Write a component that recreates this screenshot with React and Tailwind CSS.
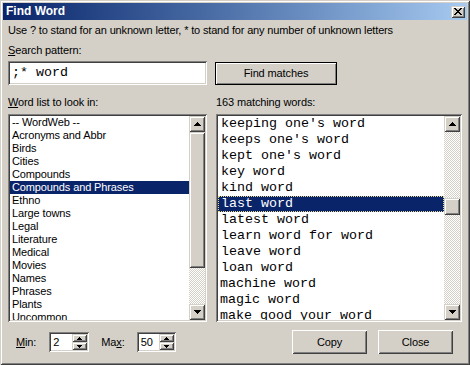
import React from 'react';

const leftItems = [
  '-- WordWeb --',
  'Acronyms and Abbr',
  'Birds',
  'Cities',
  'Compounds',
  'Compounds and Phrases',
  'Ethno',
  'Large towns',
  'Legal',
  'Literature',
  'Medical',
  'Movies',
  'Names',
  'Phrases',
  'Plants',
  'Uncommon',
];

const rightItems = [
  "keeping one's word",
  "keeps one's word",
  "kept one's word",
  'key word',
  'kind word',
  'last word',
  'latest word',
  'learn word for word',
  'leave word',
  'loan word',
  'machine word',
  'magic word',
  'make good your word',
];

// classic 3D edges
const sunken =
  'shadow-[inset_1px_1px_#808080,inset_-1px_-1px_#ffffff,inset_2px_2px_#404040,inset_-2px_-2px_#d4d0c8]';
const scrollRaised =
  'shadow-[inset_1px_1px_#d4d0c8,inset_-1px_-1px_#404040,inset_2px_2px_#ffffff,inset_-2px_-2px_#808080]';
const pushRaised =
  'shadow-[inset_1px_1px_#ffffff,inset_-1px_-1px_#404040,inset_2px_2px_#d4d0c8,inset_-2px_-2px_#808080]';
const dither =
  'bg-[image:repeating-conic-gradient(#ffffff_0_25%,#d4d0c8_0_50%)] bg-size-[2px_2px]';

const Arrow = ({ down = false, small = false }) => {
  const rows = small ? [1, 3, 5] : [1, 3, 5, 7];
  const w = rows[rows.length - 1];
  const order = down ? [...rows].reverse() : rows;
  return (
    <svg width={w} height={rows.length} viewBox={`0 0 ${w} ${rows.length}`} shapeRendering="crispEdges">
      {order.map((rw, i) => (
        <rect key={i} x={(w - rw) / 2} y={i} width={rw} height="1" fill="#000" />
      ))}
    </svg>
  );
};

const ScrollBtn = ({ down }) => (
  <div className={`h-[16px] w-[16px] bg-[#d4d0c8] flex items-center justify-center ${scrollRaised}`}>
    <Arrow down={down} />
  </div>
);

const ScrollBar = ({ spacer, thumb }) => (
  <div className="w-[16px] h-full flex flex-col shrink-0">
    <ScrollBtn />
    <div className={`flex-1 flex flex-col ${dither}`}>
      <div className={spacer} />
      <div className={`${thumb} w-[16px] bg-[#d4d0c8] ${scrollRaised}`} />
    </div>
    <ScrollBtn down />
  </div>
);

const PushButton = ({ children, className = '' }) => (
  <div
    className={`h-[24px] flex items-center justify-center bg-[#d4d0c8] ${pushRaised} ${className}`}
  >
    {children}
  </div>
);

const Spinner = ({ value, className = '' }) => (
  <div className={`h-[20px] bg-white p-[2px] flex ${sunken} ${className}`}>
    <div className="flex-1 pl-[2px] leading-[16px] text-[11px]">{value}</div>
    <div className="w-[15px] flex flex-col">
      <div className={`flex-1 flex items-center justify-center bg-[#d4d0c8] ${scrollRaised}`}>
        <Arrow small />
      </div>
      <div className={`flex-1 flex items-center justify-center bg-[#d4d0c8] ${scrollRaised}`}>
        <Arrow small down />
      </div>
    </div>
  </div>
);

export default function App() {
  return (
    <div
      className="w-[470px] h-[365px] bg-[#d4d0c8] p-[3px] flex flex-col text-[11px] tracking-[-0.12px] text-black font-['Liberation_Sans',Arial,sans-serif] shadow-[inset_1px_1px_#d4d0c8,inset_-1px_-1px_#404040,inset_2px_2px_#ffffff,inset_-2px_-2px_#808080] select-none"
    >
      {/* title bar */}
      <div className="h-[17px] shrink-0 flex items-center justify-between pl-[3px] pr-[2px] bg-linear-to-r from-[#0a246a] to-[#a6caf0]">
        <span className="text-white font-bold text-[12px] leading-[17px] tracking-normal">Find Word</span>
        <div className={`w-[14px] h-[12px] bg-[#d4d0c8] flex items-center justify-center ${scrollRaised}`}>
          <svg width="8" height="7" viewBox="0 0 8 7" shapeRendering="crispEdges">
            <path d="M0 0h2v1h-2zM6 0h2v1h-2zM1 1h2v1h-2zM5 1h2v1h-2zM2 2h4v1h-4zM3 3h2v1h-2zM2 4h4v1h-4zM1 5h2v1h-2zM5 5h2v1h-2zM0 6h2v1h-2zM6 6h2v1h-2z" fill="#000" />
          </svg>
        </div>
      </div>

      <div className="flex-1 flex flex-col px-[5px]">
        <div className="mt-[4px] leading-[13px] tracking-[-0.16px]">
          Use ? to stand for an unknown letter, * to stand for any number of unknown letters
        </div>
        <div className="mt-[7px] leading-[13px]">
          <span className="underline">S</span>earch pattern:
        </div>

        <div className="mt-[4px] flex items-center">
          <div className={`w-[199px] h-[24px] bg-white p-[2px] flex items-center ${sunken}`}>
            <span className="pl-[2px] font-['Liberation_Mono','Courier_New',monospace] text-[13.33px] leading-[16px] tracking-normal">
              ;* word
            </span>
          </div>
          <div className="ml-[8px] w-[122px] h-[23px] flex items-center justify-center bg-[#d4d0c8] shadow-[inset_1px_1px_#000,inset_-1px_-1px_#000,inset_2px_2px_#ffffff,inset_-2px_-2px_#808080]">
            Find matches
          </div>
        </div>

        <div className="mt-[11px] flex leading-[13px]">
          <div className="w-[208px]">
            <span className="underline">W</span>ord list to look in:
          </div>
          <div>163 matching words:</div>
        </div>

        {/* lists */}
        <div className="mt-[5px] flex h-[208px]">
          <div className={`w-[199px] h-full bg-white p-[2px] flex ${sunken}`}>
            <div className="flex-1 overflow-hidden">
              {leftItems.map((it, i) => (
                <div
                  key={it}
                  className={`h-[13px] leading-[13px] pl-[2px] whitespace-nowrap ${
                    i === 5 ? 'bg-[#0a246a] text-white' : ''
                  }`}
                >
                  {it}
                </div>
              ))}
            </div>
            <ScrollBar spacer="h-0" thumb="h-[136px]" />
          </div>

          <div className={`ml-[9px] w-[246px] h-full bg-white p-[2px] flex ${sunken}`}>
            <div className="flex-1 overflow-hidden font-['Liberation_Mono','Courier_New',monospace] text-[13.33px] tracking-normal">
              {rightItems.map((it, i) => (
                <div
                  key={it}
                  className={`h-[16px] leading-[16px] whitespace-nowrap ${i >= 10 ? 'pl-[2px]' : 'pl-[3px]'} ${
                    i === 5
                      ? 'bg-[#0a246a] text-white outline-1 outline-dotted outline-[#e8d890] -outline-offset-1'
                      : ''
                  }`}
                >
                  {it}
                </div>
              ))}
            </div>
            <ScrollBar spacer="h-[66px]" thumb="h-[17px]" />
          </div>
        </div>

        {/* bottom row */}
        <div className="mt-[8px] flex items-center h-[24px]">
          <span className="ml-[8px] leading-[13px]">
            <span className="underline">M</span>in:
          </span>
          <Spinner value="2" className="ml-[13px] w-[40px]" />
          <span className="ml-[12px] leading-[13px]">
            Ma<span className="underline">x</span>:
          </span>
          <Spinner value="50" className="ml-[12px] w-[39px]" />
          <PushButton className="ml-auto w-[75px]">Copy</PushButton>
          <PushButton className="ml-[11px] w-[75px] mr-[9px]">Close</PushButton>
        </div>
      </div>
    </div>
  );
}
